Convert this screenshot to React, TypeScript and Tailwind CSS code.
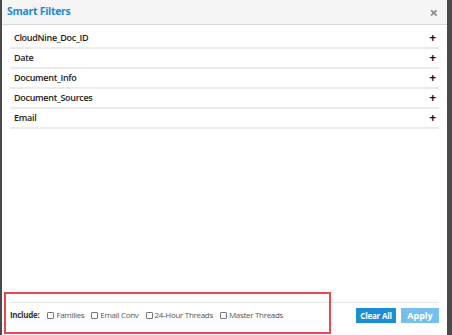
const groups = ['CloudNine_Doc_ID', 'Date', 'Document_Info', 'Document_Sources', 'Email'];
const includes = ['Families', 'Email Conv', '24-Hour Threads', 'Master Threads'];

export default function App() {
  return (
    <div className="flex h-[335px] w-[452px] bg-[#4a4a4a] font-['Open_Sans',sans-serif]">
      <div className="relative ml-[2px] flex w-[445px] flex-col bg-white">
        <div className="flex h-[25px] items-center justify-between border-b border-[#d9d9d9] bg-[#f5f5f5] pl-[5px] pr-[9px]">
          <span className="text-[10.5px] font-bold tracking-[-0.3px] text-[#1b8ad3]">Smart Filters</span>
          <span className="text-[15px] font-bold leading-none text-[#8a8a8a]">×</span>
        </div>
        <div className="flex flex-1 flex-col px-[8px] pt-[4px]">
          {groups.map(g => (
            <div key={g} className="flex h-[20px] items-center justify-between border-b-2 border-[#ececec] pl-[4px] pr-[3px]">
              <span className="text-[9px] font-semibold tracking-[-0.3px] text-[#222]">{g}</span>
              <span className="text-[12px] font-bold leading-none text-[#111]">+</span>
            </div>
          ))}
        </div>
        <div className="mx-[8px] mb-[12px] flex items-end justify-between border-t border-[#e4e4e4] pt-[5px]">
          <div className="flex items-center pb-[2px]">
            <span className="mr-[8px] text-[8px] font-bold tracking-[-0.3px] text-[#333]">Include:</span>
            {includes.map(i => (
              <label key={i} className="mr-[7px] flex items-center gap-[2px] text-[8px] tracking-[-0.3px] text-[#555]">
                <span className="inline-block h-[7px] w-[7px] rounded-[1px] border border-[#777] bg-white" />
                {i}
              </label>
            ))}
          </div>
          <div className="flex gap-[5px]">
            <button className="h-[15px] w-[40px] bg-[#1a8fd6] text-[8px] font-bold tracking-[-0.2px] text-white">Clear All</button>
            <button className="h-[15px] w-[38px] bg-[#74bff0] text-[9px] font-bold text-white">Apply</button>
          </div>
        </div>
        <div className="absolute left-[2px] top-[292px] h-[42px] w-[327px] border-2 border-[#e8494f]" />
      </div>
    </div>
  );
}
